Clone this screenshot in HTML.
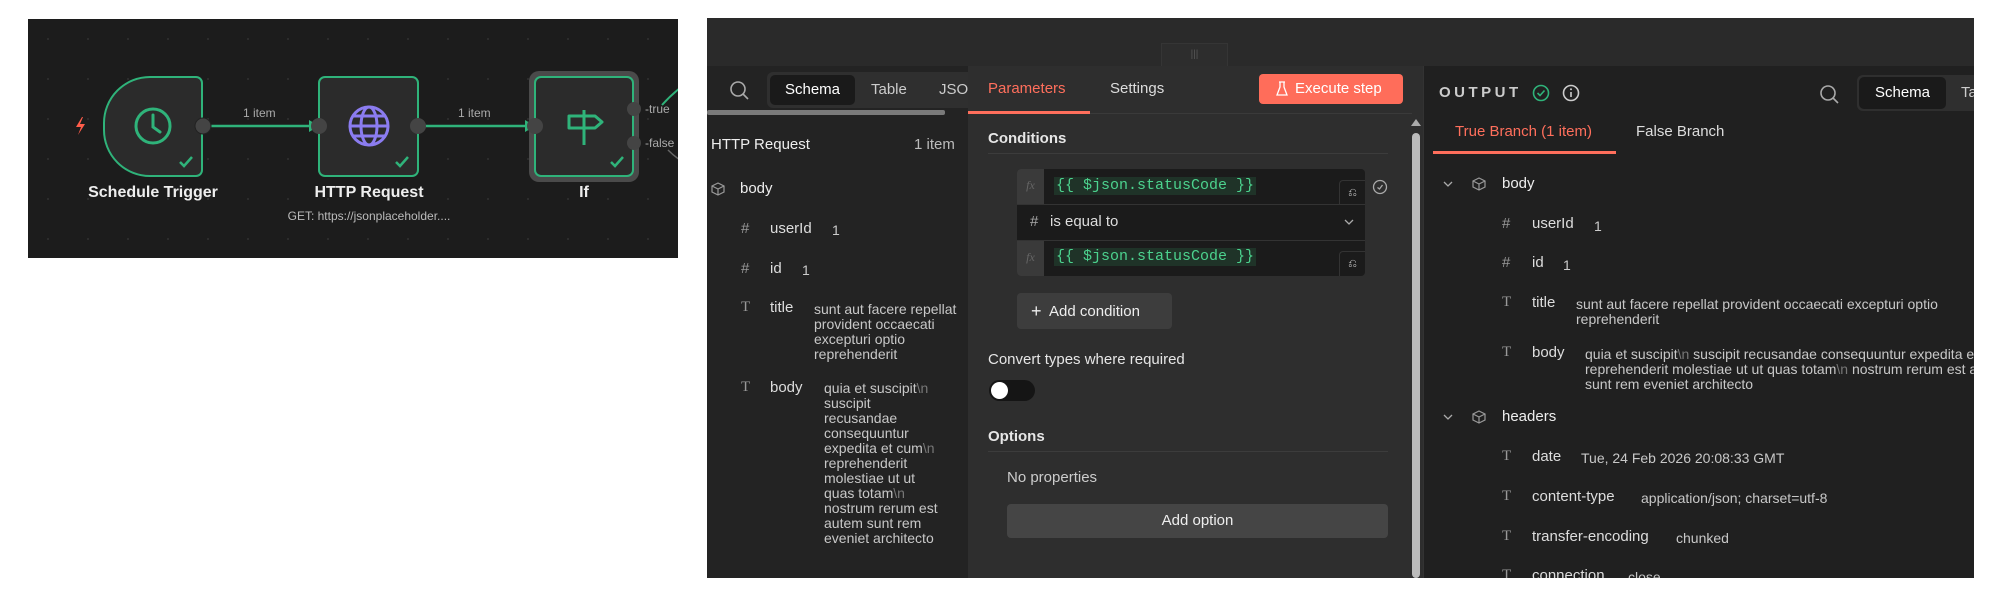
<!DOCTYPE html>
<html><head><meta charset="utf-8">
<style>
*{margin:0;padding:0;box-sizing:border-box}
body{width:1999px;height:598px;background:#fff;position:relative;overflow:hidden;font-family:"Liberation Sans",sans-serif;color:#ddd}
.a{position:absolute;white-space:nowrap}
.t{font-size:14px;line-height:18px}
.v{font-size:14px;line-height:15px;color:#c8c8c8;white-space:normal;overflow-wrap:anywhere}
.v i{font-style:normal;color:#777}
.ic{color:#999;font-size:15px}
.mono{font-family:"Liberation Mono",monospace}
</style></head><body>

<div class="a" style="left:28px;top:19px;width:650px;height:239px;background:#1c1c1c;background-image:radial-gradient(#2e2e2e 1px,transparent 1.2px);background-size:40px 40px;overflow:hidden">
<svg width="650" height="239" style="position:absolute;left:0;top:0">
 <g transform="translate(-28,-19)">
 <line x1="210" y1="126" x2="309" y2="126" stroke="#2fb37a" stroke-width="2.5"/>
 <polygon points="309,120 319,126 309,132" fill="#2fb37a"/>
 <line x1="425" y1="126" x2="525" y2="126" stroke="#2fb37a" stroke-width="2.5"/>
 <polygon points="525,120 535,126 525,132" fill="#2fb37a"/>
 <path d="M662 105 Q670 96 680 88" stroke="#2fb37a" stroke-width="2" fill="none"/>
 <path d="M668 150 Q674 156 680 160" stroke="#666" stroke-width="1.5" fill="none"/>
 <path d="M150 77 H196 a6 6 0 0 1 6 6 V170 a6 6 0 0 1 -6 6 H150 a46 46 0 0 1 -46 -46 V123 a46 46 0 0 1 46 -46z" fill="#2b2b2b" stroke="#2fb37a" stroke-width="2"/>
 <circle cx="153" cy="126" r="17" fill="none" stroke="#2fb37a" stroke-width="3"/>
 <path d="M153 115 V127 L160 132" fill="none" stroke="#2fb37a" stroke-width="3" stroke-linecap="round"/>
 <path d="M180 162 l4 4 l8 -9" fill="none" stroke="#2fb37a" stroke-width="2.5"/>
 <path d="M82 117 l-6 10 h5 l-3 8 l7 -11 h-5 l3 -7z" fill="#ff5d4a"/>
 <circle cx="203" cy="126" r="8" fill="#444" stroke="#222" stroke-width="1"/>
 <rect x="319" y="77" width="99" height="99" rx="6" fill="#2b2b2b" stroke="#2fb37a" stroke-width="2"/>
 <g fill="none" stroke="#8b7cf0" stroke-width="3"><circle cx="369" cy="126" r="19"/><ellipse cx="369" cy="126" rx="8" ry="19"/><line x1="350" y1="126" x2="388" y2="126"/><line x1="353" y1="116" x2="385" y2="116"/><line x1="353" y1="136" x2="385" y2="136"/></g>
 <path d="M396 162 l4 4 l8 -9" fill="none" stroke="#2fb37a" stroke-width="2.5"/>
 <circle cx="319" cy="126" r="8" fill="#444"/>
 <circle cx="418" cy="126" r="8" fill="#444"/>
 <rect x="529" y="71" width="110" height="111" rx="10" fill="#4a4a4a"/>
 <rect x="535" y="77" width="98" height="99" rx="6" fill="#2b2b2b" stroke="#2fb37a" stroke-width="2"/>
 <path d="M584 110 V145 M569 116 H595 l7 6 l-7 6 H569z" fill="none" stroke="#2fb37a" stroke-width="3" stroke-linejoin="round"/>
 <path d="M611 162 l4 4 l8 -9" fill="none" stroke="#2fb37a" stroke-width="2.5"/>
 <circle cx="535" cy="126" r="8" fill="#444"/>
 <circle cx="634" cy="109" r="7" fill="#444"/>
 <circle cx="634" cy="143" r="7" fill="#444"/>
 </g>
</svg>
<div class="a" style="left:215px;top:87px;font-size:12px;color:#aaa">1 item</div>
<div class="a" style="left:430px;top:87px;font-size:12px;color:#aaa">1 item</div>
<div class="a" style="left:617px;top:83px;font-size:12px;color:#aaa">-true</div>
<div class="a" style="left:617px;top:117px;font-size:12px;color:#aaa">-false</div>
<div class="a" style="left:55px;top:165px;width:140px;text-align:center;font-size:16px;font-weight:bold;color:#eee">Schedule Trigger</div>
<div class="a" style="left:271px;top:165px;width:140px;text-align:center;font-size:16px;font-weight:bold;color:#eee">HTTP Request</div>
<div class="a" style="left:486px;top:165px;width:140px;text-align:center;font-size:16px;font-weight:bold;color:#eee">If</div>
<div class="a" style="left:251px;top:190px;width:180px;text-align:center;font-size:12px;color:#bbb">GET: https://jsonplaceholder....</div>
</div>

<div class="a" style="left:707px;top:18px;width:1267px;height:560px;background:#2a2a2a;overflow:hidden">
 <div class="a" style="left:454px;top:25px;width:67px;height:23px;background:#2d2d2d;border:1px solid #353535;border-bottom:none;color:#555;font-size:10px;text-align:center;line-height:22px">|||</div>
 <div class="a" style="left:0;top:48px;width:261px;height:512px;background:#232323"></div>
 <div class="a" style="left:261px;top:48px;width:455px;height:512px;background:#2e2e2e"></div>
 <div class="a" style="left:716px;top:48px;width:551px;height:512px;background:#202020;border-left:1px solid #333"></div>
</div>

<svg class="a" style="left:729px;top:80px" width="20" height="20"><circle cx="9" cy="9" r="7" fill="none" stroke="#aaa" stroke-width="1.6"/><line x1="14" y1="14" x2="19" y2="19" stroke="#aaa" stroke-width="1.6"/></svg>
<div class="a" style="left:767px;top:72px;width:201px;height:36px;background:#2f2f2f;border-radius:6px 0 0 6px"></div>
<div class="a" style="left:770px;top:75px;width:85px;height:30px;background:#1a1a1a;border-radius:5px;color:#fff;font-size:15px;line-height:30px;text-align:center">Schema</div>
<div class="a" style="left:871px;top:81px;color:#ccc;font-size:15px;line-height:18px">Table</div>
<div class="a" style="left:939px;top:72px;width:29px;height:36px;overflow:hidden;color:#ccc;font-size:15px;line-height:36px">JSON</div>
<div class="a" style="left:707px;top:110px;width:238px;height:5px;background:#7a7a7a;border-radius:2px"></div>
<div class="a t" style="left:711px;top:136px;color:#eee;font-size:15px">HTTP Request</div>
<div class="a" style="left:914px;top:136px;font-size:15px;line-height:18px;color:#bbb">1 item</div>
<svg class="a" style="left:711px;top:182px" width="14" height="14"><path d="M7 1 L13 4 V10 L7 13 L1 10 V4z M1 4 L7 7 L13 4 M7 7 V13" fill="none" stroke="#999" stroke-width="1.2"/></svg>
<div class="a t" style="left:740px;top:180px;color:#eee;font-size:15px">body</div>
<div class="a ic" style="left:741px;top:220px">#</div><div class="a t" style="left:770px;top:220px;font-size:15px">userId</div><div class="a t" style="left:832px;top:221px;color:#ccc">1</div>
<div class="a ic" style="left:741px;top:260px">#</div><div class="a t" style="left:770px;top:260px;font-size:15px">id</div><div class="a t" style="left:802px;top:261px;color:#ccc">1</div>
<div class="a ic" style="left:741px;top:299px;font-family:'Liberation Serif',serif">T</div><div class="a t" style="left:770px;top:299px;font-size:15px">title</div>
<div class="a v" style="left:814px;top:302px;width:150px">sunt aut facere repellat provident occaecati excepturi optio reprehenderit</div>
<div class="a ic" style="left:741px;top:379px;font-family:'Liberation Serif',serif">T</div><div class="a t" style="left:770px;top:379px;font-size:15px">body</div>
<div class="a v" style="left:824px;top:381px;width:122px">quia et suscipit<i>\n</i> suscipit recusandae consequuntur expedita et cum<i>\n</i> reprehenderit molestiae ut ut quas totam<i>\n</i> nostrum rerum est autem sunt rem eveniet architecto</div>

<div class="a" style="left:988px;top:80px;color:#ff6f5c;font-size:15px;line-height:18px">Parameters</div>
<div class="a" style="left:968px;top:111px;width:122px;height:3px;background:#ff6f5c"></div>
<div class="a" style="left:1090px;top:113px;width:322px;height:1px;background:#3a3a3a"></div>
<div class="a" style="left:1110px;top:80px;color:#ddd;font-size:15px;line-height:18px">Settings</div>
<div class="a" style="left:1259px;top:74px;width:144px;height:30px;background:#ff6d5a;border-radius:4px;color:#fff;font-size:15px;line-height:30px;padding-left:36px">Execute step</div>
<svg class="a" style="left:1276px;top:81px" width="12" height="16"><path d="M4 1 V6 L1 14 H11 L8 6 V1 M3 1 H9" fill="none" stroke="#fff" stroke-width="1.3"/></svg>
<div class="a" style="left:988px;top:130px;font-size:15px;font-weight:bold;color:#e6e6e6">Conditions</div>
<div class="a" style="left:988px;top:153px;width:400px;height:1px;background:#3c3c3c"></div>
<div class="a" style="left:1017px;top:169px;width:348px;height:107px;background:#1b1b1b;border-radius:4px"></div>
<div class="a" style="left:1017px;top:204px;width:348px;height:1px;background:#333"></div>
<div class="a" style="left:1017px;top:240px;width:348px;height:1px;background:#333"></div>
<div class="a" style="left:1017px;top:169px;width:27px;height:35px;background:#3a3a3a;border-radius:4px 0 0 0;color:#666;font-style:italic;font-family:'Liberation Serif',serif;font-size:12px;line-height:32px;text-align:center">fx</div>
<div class="a" style="left:1017px;top:241px;width:27px;height:35px;background:#3a3a3a;border-radius:0 0 0 4px;color:#666;font-style:italic;font-family:'Liberation Serif',serif;font-size:12px;line-height:32px;text-align:center">fx</div>
<div class="a mono" style="left:1054px;top:177px;font-size:15px;line-height:18px;color:#4cd28e;background:#1f3328;padding:0 2px">{{ $json.statusCode }}</div>
<div class="a mono" style="left:1054px;top:248px;font-size:15px;line-height:18px;color:#4cd28e;background:#1f3328;padding:0 2px">{{ $json.statusCode }}</div>
<div class="a" style="left:1339px;top:180px;width:26px;height:24px;border:1px solid #333;border-right:none;border-bottom:none;border-radius:4px 0 0 0;color:#ccc;font-size:11px;text-align:center;line-height:24px">⎌</div>
<div class="a" style="left:1339px;top:251px;width:26px;height:25px;border:1px solid #333;border-right:none;border-bottom:none;border-radius:4px 0 0 0;color:#ccc;font-size:11px;text-align:center;line-height:24px">⎌</div>
<svg class="a" style="left:1372px;top:179px" width="16" height="16"><circle cx="8" cy="8" r="6.5" fill="none" stroke="#aaa" stroke-width="1.3"/><path d="M5.5 8.5 l2 1.5 l3 -4" fill="none" stroke="#aaa" stroke-width="1.3"/></svg>
<div class="a ic" style="left:1030px;top:213px;color:#aaa">#</div>
<div class="a" style="left:1050px;top:213px;color:#ddd;font-size:15px;line-height:18px">is equal to</div>
<svg class="a" style="left:1344px;top:218px" width="10" height="8"><path d="M1 2 l4 4 l4 -4" fill="none" stroke="#aaa" stroke-width="1.3"/></svg>
<div class="a" style="left:1017px;top:293px;width:155px;height:36px;background:#3d3d3d;border-radius:4px;color:#eee;font-size:15px;line-height:36px;padding-left:14px"><span style="font-size:18px;vertical-align:-1px">+</span>&nbsp; Add condition</div>
<div class="a" style="left:988px;top:351px;color:#e6e6e6;font-size:15px;line-height:18px">Convert types where required</div>
<div class="a" style="left:989px;top:380px;width:46px;height:21px;background:#151515;border-radius:11px"></div>
<div class="a" style="left:991px;top:382px;width:17px;height:17px;background:#fff;border-radius:50%"></div>
<div class="a" style="left:988px;top:428px;font-size:15px;font-weight:bold;color:#e6e6e6">Options</div>
<div class="a" style="left:988px;top:451px;width:400px;height:1px;background:#3c3c3c"></div>
<div class="a" style="left:1007px;top:469px;color:#ccc;font-size:15px;line-height:18px">No properties</div>
<div class="a" style="left:1007px;top:504px;width:381px;height:34px;background:#454545;border-radius:4px;color:#eee;font-size:15px;line-height:34px;text-align:center">Add option</div>
<div class="a" style="left:1411px;top:119px;width:0;height:0;border-left:5px solid transparent;border-right:5px solid transparent;border-bottom:7px solid #aaa"></div>
<div class="a" style="left:1412px;top:133px;width:8px;height:445px;background:#bbb;border-radius:4px"></div>

<div class="a" style="left:1423px;top:66px;width:551px;height:512px;overflow:hidden">
<div style="position:absolute;left:-1423px;top:-66px;width:1999px;height:598px">
<div class="a" style="left:1439px;top:84px;font-size:15px;font-weight:bold;letter-spacing:3.5px;color:#ccc;line-height:18px">OUTPUT</div>
<svg class="a" style="left:1532px;top:84px" width="18" height="18"><circle cx="9" cy="9" r="7.5" fill="none" stroke="#2fb37a" stroke-width="1.6"/><path d="M5.5 9 l2.5 2.5 l4.5 -5" fill="none" stroke="#2fb37a" stroke-width="1.6"/></svg>
<svg class="a" style="left:1562px;top:84px" width="18" height="18"><circle cx="9" cy="9" r="7.5" fill="none" stroke="#ccc" stroke-width="1.6"/><line x1="9" y1="8" x2="9" y2="13" stroke="#ccc" stroke-width="1.6"/><circle cx="9" cy="5.3" r="1" fill="#ccc"/></svg>
<svg class="a" style="left:1819px;top:84px" width="20" height="20"><circle cx="9" cy="9" r="7" fill="none" stroke="#aaa" stroke-width="1.6"/><line x1="14" y1="14" x2="19" y2="19" stroke="#aaa" stroke-width="1.6"/></svg>
<div class="a" style="left:1857px;top:75px;width:130px;height:36px;background:#2f2f2f;border-radius:6px 0 0 6px"></div>
<div class="a" style="left:1859px;top:77px;width:87px;height:32px;background:#1a1a1a;border-radius:5px;color:#fff;font-size:15px;line-height:32px;text-align:center">Schema</div>
<div class="a" style="left:1961px;top:75px;color:#ccc;font-size:15px;line-height:36px">Table</div>
<div class="a" style="left:1455px;top:123px;color:#ff6f5c;font-size:15px;line-height:18px">True Branch (1 item)</div>
<div class="a" style="left:1433px;top:151px;width:183px;height:3px;background:#ff6f5c"></div>
<div class="a" style="left:1636px;top:123px;color:#ddd;font-size:15px;line-height:18px">False Branch</div>

<svg class="a" style="left:1443px;top:180px" width="10" height="8"><path d="M1 2 l4 4 l4 -4" fill="none" stroke="#aaa" stroke-width="1.3"/></svg>
<svg class="a" style="left:1472px;top:177px" width="14" height="14"><path d="M7 1 L13 4 V10 L7 13 L1 10 V4z M1 4 L7 7 L13 4 M7 7 V13" fill="none" stroke="#999" stroke-width="1.2"/></svg>
<div class="a t" style="left:1502px;top:175px;color:#eee;font-size:15px">body</div>
<div class="a ic" style="left:1502px;top:215px">#</div><div class="a t" style="left:1532px;top:215px;font-size:15px">userId</div><div class="a t" style="left:1594px;top:217px;color:#ccc">1</div>
<div class="a ic" style="left:1502px;top:254px">#</div><div class="a t" style="left:1532px;top:254px;font-size:15px">id</div><div class="a t" style="left:1563px;top:256px;color:#ccc">1</div>
<div class="a ic" style="left:1502px;top:294px;font-family:'Liberation Serif',serif">T</div><div class="a t" style="left:1532px;top:294px;font-size:15px">title</div>
<div class="a v" style="left:1576px;top:297px;width:410px;overflow-wrap:normal">sunt aut facere repellat provident occaecati excepturi optio reprehenderit</div>
<div class="a ic" style="left:1502px;top:344px;font-family:'Liberation Serif',serif">T</div><div class="a t" style="left:1532px;top:344px;font-size:15px">body</div>
<div class="a v" style="left:1585px;top:347px;width:440px;overflow-wrap:normal">quia et suscipit<i>\n</i> suscipit recusandae consequuntur expedita et cum<i>\n</i> reprehenderit molestiae ut ut quas totam<i>\n</i> nostrum rerum est autem sunt rem eveniet architecto</div>
<svg class="a" style="left:1443px;top:413px" width="10" height="8"><path d="M1 2 l4 4 l4 -4" fill="none" stroke="#aaa" stroke-width="1.3"/></svg>
<svg class="a" style="left:1472px;top:410px" width="14" height="14"><path d="M7 1 L13 4 V10 L7 13 L1 10 V4z M1 4 L7 7 L13 4 M7 7 V13" fill="none" stroke="#999" stroke-width="1.2"/></svg>
<div class="a t" style="left:1502px;top:408px;color:#eee;font-size:15px">headers</div>
<div class="a ic" style="left:1502px;top:448px;font-family:'Liberation Serif',serif">T</div><div class="a t" style="left:1532px;top:448px;font-size:15px">date</div><div class="a v" style="left:1581px;top:451px">Tue, 24 Feb 2026 20:08:33 GMT</div>
<div class="a ic" style="left:1502px;top:488px;font-family:'Liberation Serif',serif">T</div><div class="a t" style="left:1532px;top:488px;font-size:15px">content-type</div><div class="a v" style="left:1641px;top:491px">application/json; charset=utf-8</div>
<div class="a ic" style="left:1502px;top:528px;font-family:'Liberation Serif',serif">T</div><div class="a t" style="left:1532px;top:528px;font-size:15px">transfer-encoding</div><div class="a v" style="left:1676px;top:531px">chunked</div>
<div class="a ic" style="left:1502px;top:567px;font-family:'Liberation Serif',serif">T</div><div class="a t" style="left:1532px;top:567px;font-size:15px">connection</div><div class="a v" style="left:1628px;top:570px">close</div>
</div></div>
</body></html>
